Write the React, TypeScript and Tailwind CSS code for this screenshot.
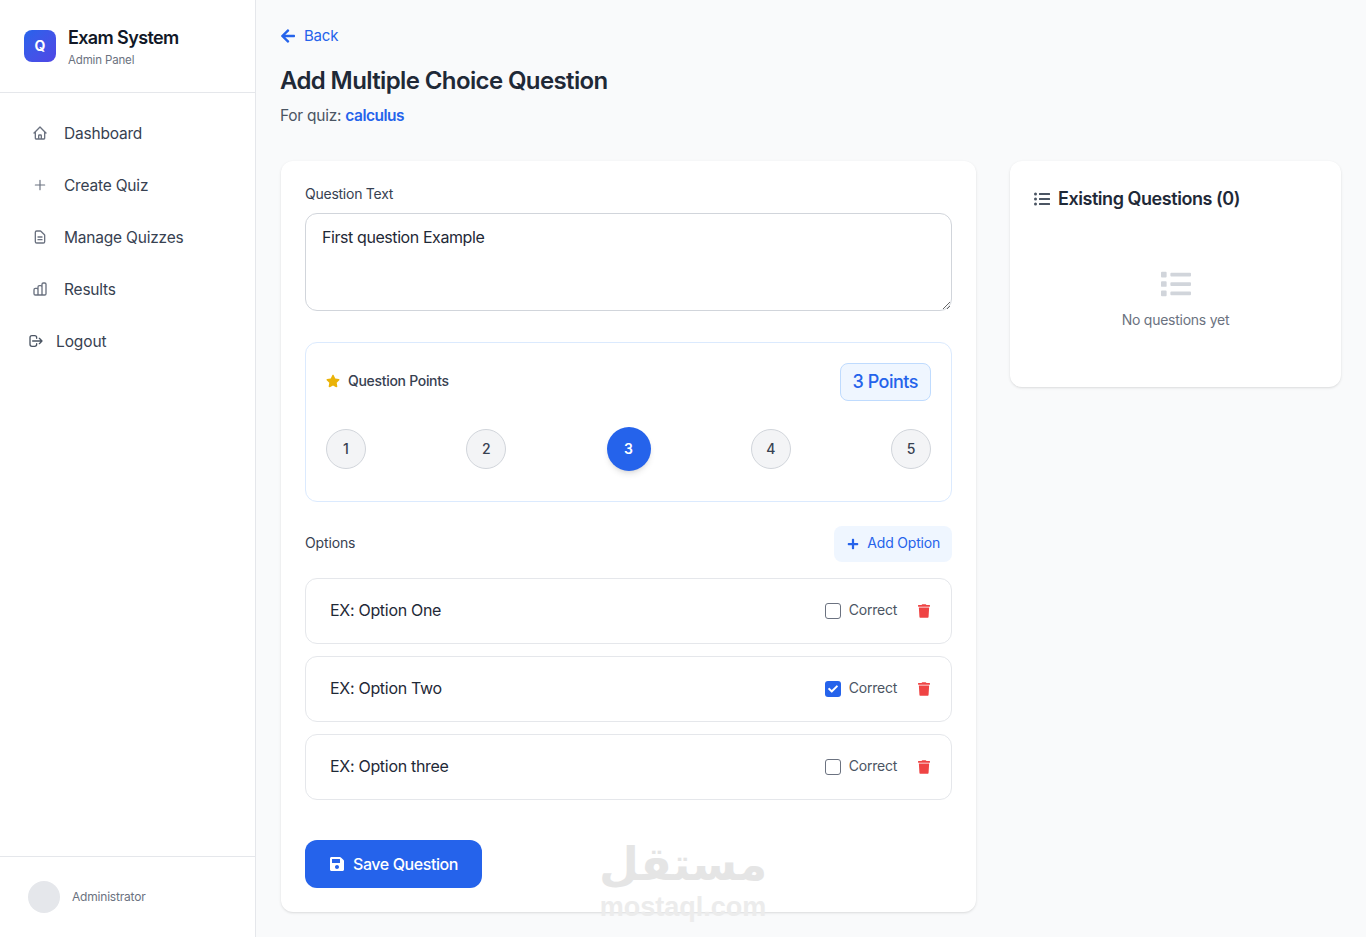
import {
  FaArrowLeft,
  FaCheck,
  FaList,
  FaListUl,
  FaPlus,
  FaSave,
  FaStar,
  FaTrash,
} from "react-icons/fa";
import {
  HiOutlineChartBar,
  HiOutlineDocumentText,
  HiOutlineHome,
  HiOutlineLogout,
  HiOutlinePlus,
} from "react-icons/hi";

const navItems = [
  { label: "Dashboard", icon: HiOutlineHome, iconClass: "h-4 w-4" },
  { label: "Create Quiz", icon: HiOutlinePlus, iconClass: "mx-px h-3.5 w-3.5" },
  { label: "Manage Quizzes", icon: HiOutlineDocumentText, iconClass: "h-4 w-4" },
  { label: "Results", icon: HiOutlineChartBar, iconClass: "h-4 w-4" },
];

const options = [
  { text: "EX: Option One", correct: false },
  { text: "EX: Option Two", correct: true },
  { text: "EX: Option three", correct: false },
];

function Sidebar() {
  return (
    <aside className="flex w-64 shrink-0 flex-col border-r border-[#e5e7eb] bg-white">
      {/* Brand */}
      <div className="flex h-[93px] items-center gap-3 border-b border-[#e5e7eb] px-6">
        <div className="flex h-8 w-8 items-center justify-center rounded-lg bg-gradient-to-br from-[#2563eb] to-[#4f46e5] text-sm font-bold text-white">
          Q
        </div>
        <div className="pt-[2px]">
          <p className="text-[18px] leading-6 font-semibold tracking-[-0.62px] text-[#111827]">Exam System</p>
          <p className="mt-[2px] text-[11.5px] leading-4 tracking-[-0.15px] text-[#6b7280]">Admin Panel</p>
        </div>
      </div>

      {/* Nav */}
      <nav className="flex flex-1 flex-col gap-2 px-4 py-[18px]">
        {navItems.map((item) => (
          <a key={item.label} className="flex h-11 items-center gap-4 px-4 text-[15.5px] tracking-[-0.2px] text-[#374151]">
            <item.icon className={item.iconClass + " text-[#6b7280]"} />
            <span className="pt-[2px]">{item.label}</span>
          </a>
        ))}
        <a className="flex h-11 items-center gap-3 px-3 text-[15.5px] tracking-[-0.1px] text-[#374151]">
          <HiOutlineLogout className="h-4 w-4 text-[#4b5563]" />
          <span className="pt-[2px]">Logout</span>
        </a>
      </nav>

      {/* User */}
      <div className="flex h-[81px] items-center gap-3 border-t border-[#e5e7eb] px-7">
        <div className="h-8 w-8 rounded-full bg-[#e5e7eb]" />
        <span className="text-xs tracking-[-0.2px] text-[#6b7280]">Administrator</span>
      </div>
    </aside>
  );
}

function PointsCard() {
  return (
    <div className="mt-[31px] rounded-xl border border-[#dbeafe] p-5">
      <div className="flex items-center justify-between">
        <div className="flex items-center gap-2 pb-[2px]">
          <FaStar className="h-3.5 w-3.5 text-[#eab308]" />
          <span className="text-sm font-medium tracking-[-0.3px] text-[#374151]">Question Points</span>
        </div>
        <span className="rounded-lg border border-[#bfdbfe] bg-[#eff6ff] px-3 pt-[6px] pb-[6px] text-lg leading-6 font-medium tracking-[-0.5px] text-[#2563eb]">
          3 Points
        </span>
      </div>
      <div className="mt-[26px] mb-[10px] flex items-center justify-between">
        {[1, 2, 3, 4, 5].map((n) =>
          n === 3 ? (
            <button key={n} className="flex h-11 w-11 items-center justify-center rounded-full bg-[#2563eb] text-sm font-semibold text-white shadow-md">
              {n}
            </button>
          ) : (
            <button key={n} className="flex h-10 w-10 items-center justify-center rounded-full border border-[#d1d5db] bg-[#f3f4f6] text-sm font-medium text-[#374151]">
              {n}
            </button>
          ),
        )}
      </div>
    </div>
  );
}

function OptionRow({ text, correct }: { text: string; correct: boolean }) {
  return (
    <div className="flex h-[66px] items-center rounded-xl border border-[#e5e7eb] pr-[21px] pl-6">
      <input
        defaultValue={text}
        className="min-w-0 flex-1 pb-[2px] text-base tracking-[-0.3px] text-[#1f2937] outline-none"
      />
      <label className="flex items-center gap-2 text-sm tracking-[-0.25px] text-[#4b5563]">
        {correct ? (
          <span className="flex h-4 w-4 items-center justify-center rounded-[3px] bg-[#2563eb]">
            <FaCheck className="h-2.5 w-2.5 text-white" />
          </span>
        ) : (
          <span className="h-4 w-4 rounded-[3px] border border-[#6b7280] bg-white" />
        )}
        <span className="pb-[2px]">Correct</span>
      </label>
      <FaTrash className="ml-[21px] h-3.5 w-3 text-[#ef4444]" />
    </div>
  );
}

export default function App() {
  return (
    <div className="flex h-[937px] overflow-hidden bg-[#f9fafb] font-[Inter,sans-serif]">
      <Sidebar />
      <main className="relative flex-1 px-6 pt-[26px]">
        <a className="flex h-5 items-center gap-2 text-[15px] tracking-[-0.2px] text-[#2563eb]">
          <FaArrowLeft className="h-4 w-4" />
          Back
        </a>
        <h1 className="mt-[19px] text-2xl font-semibold tracking-[-0.62px] text-[#1f2937]">Add Multiple Choice Question</h1>
        <p className="mt-[7px] text-[15.5px] leading-6 tracking-[-0.25px] text-[#4b5563]">
          For quiz: <span className="font-semibold tracking-[-0.5px] text-[#2563eb]">calculus</span>
        </p>

        <div className="mx-px mt-[33px] grid grid-cols-[695px_331px] items-start gap-[34px]">
          <section className="rounded-xl bg-white p-6 shadow-sm">
            <label className="block text-sm leading-[17px] tracking-[-0.25px] text-[#374151]">Question Text</label>
            <textarea
              defaultValue="First question Example"
              className="mt-[11px] block h-[98px] w-full rounded-xl border border-[#d1d5db] px-4 pt-[11px] pb-3 text-base tracking-[-0.42px] text-[#1f2937] outline-none"
            />

            <PointsCard />

            <div className="mt-6 flex items-center justify-between">
              <span className="pb-[2px] text-sm tracking-[-0.15px] text-[#374151]">Options</span>
              <button className="flex h-9 items-center gap-2 rounded-lg bg-[#eff6ff] pr-3 pl-[13px] text-sm tracking-[-0.2px] text-[#2563eb]">
                <FaPlus className="h-3 w-3" />
                <span className="pb-[2px]">Add Option</span>
              </button>
            </div>

            <div className="mt-4 flex flex-col gap-3">
              {options.map((o) => (
                <OptionRow key={o.text} text={o.text} correct={o.correct} />
              ))}
            </div>

            <button className="mt-10 flex h-12 items-center gap-2 rounded-xl bg-[#2563eb] px-6 text-base font-medium tracking-[-0.42px] text-white">
              <FaSave className="h-4 w-4" />
              Save Question
            </button>
          </section>

          <section className="h-[226px] rounded-xl bg-white p-6 shadow-sm">
            <div className="flex items-center gap-2">
              <FaListUl className="h-4 w-4 text-[#4b5563]" />
              <h2 className="text-lg font-semibold tracking-[-0.45px] text-[#1f2937]">Existing Questions (0)</h2>
            </div>
            <div className="mt-[56px] flex flex-col items-center">
              <FaList className="h-[30px] w-[30px] text-[#d1d5db]" />
              <p className="mt-[11px] text-sm tracking-[-0.25px] text-[#6b7280]">No questions yet</p>
            </div>
          </section>
        </div>

        {/* mostaql watermark */}
        <div className="pointer-events-none absolute top-[834px] left-[344px] flex w-[166px] flex-col items-center">
          <span className="font-['DejaVu_Sans',sans-serif] text-[46px] leading-[60px] font-bold text-[#e5e5e5]">مستقل</span>
          <span className="mt-[4px] font-['Liberation_Sans',sans-serif] text-[27px] leading-[18px] font-bold text-[#ececec]">mostaql.com</span>
        </div>
      </main>
    </div>
  );
}
